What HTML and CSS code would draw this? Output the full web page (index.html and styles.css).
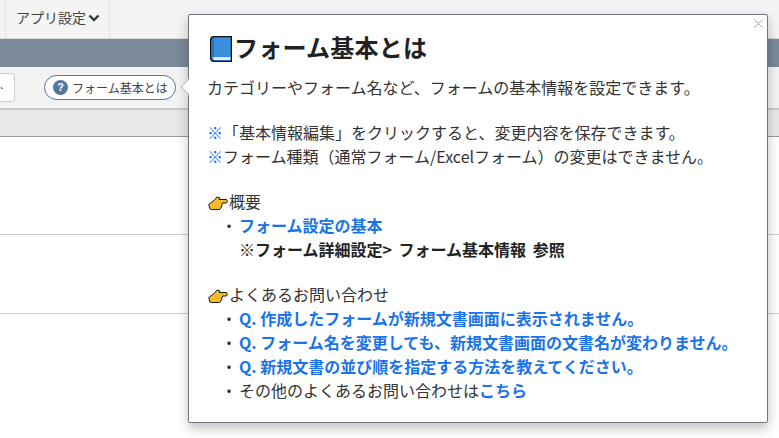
FILE: index.html
```html
<!DOCTYPE html>
<html lang="ja">
<head>
<meta charset="utf-8">
<title>フォーム基本とは</title>
<link rel="stylesheet" href="styles.css">
</head>
<body>
<div class="app">
  <nav class="topnav">
    <div class="tab tab-blank"></div>
    <div class="tab">アプリ設定<svg class="chev" viewBox="0 0 12 8" width="12" height="8"><path d="M1.500 1.500 6 6l4.500-4.500" fill="none" stroke="#2f3a46" stroke-width="2.400"/></svg></div>
  </nav>
  <div class="band"></div>
  <div class="toolbar">
    <div class="tool-btn"><svg viewBox="0 0 5 4" width="5" height="4"><path d="M0 3.500 1 2.500l2 1.500" fill="none" stroke="#444" stroke-width="1"/></svg></div>
    <button class="help-pill"><span class="q">?</span>フォーム基本とは</button>
  </div>
  <div class="table-head"></div>
  <div class="row row-a"></div>
  <div class="row row-b"></div>
</div>
<aside class="pop">
  <span class="arrow"></span>
  <span class="close"><svg viewBox="0 0 9 9" width="9" height="9"><path d="M.5.500l8 8M8.500.500l-8 8" stroke="#a8a8a8" stroke-width="1" fill="none"/></svg></span>
  <h1 class="pop-title"><svg class="book" viewBox="0 0 22 26" width="22" height="26"><path d="M5 .500h16.500v25H5Q.500 25.500.500 21V5Q.500.500 5 .500z" fill="#3a8edb" stroke="#111" stroke-width="1.500"/><path d="M3 2.500v18" stroke="#2a70b8" stroke-width="2"/><rect x="3.500" y="21" width="17" height="3" fill="#e2e9f0"/></svg>フォーム基本とは</h1>
  <p class="lead">カテゴリーやフォーム名など、フォームの基本情報を設定できます。</p>
  <p class="note"><span class="mark">※</span>「基本情報編集」をクリックすると、変更内容を保存できます。</p>
  <p class="note gap"><span class="mark">※</span>フォーム種類（通常フォーム/Excelフォーム）の変更はできません。</p>
  <p class="hd"><svg class="hand" viewBox="0 0 20 14" width="20" height="14"><path d="M.700 8.500 6 4.500 9 1l3 1-1 1.500h7.500q1.800 1.800 0 3.500H14.500L13 12l-1.500 1.500H3.500L2 13z" fill="#f7ba2c" stroke="#1c1c1c" stroke-width="1"/></svg>概要</p>
  <ul class="links">
    <li><a>フォーム設定の基本</a></li>
    <li class="plain"><b>※フォーム詳細設定&gt; フォーム基本情報 参照</b></li>
  </ul>
  <p class="hd"><svg class="hand" viewBox="0 0 20 14" width="20" height="14"><path d="M.700 8.500 6 4.500 9 1l3 1-1 1.500h7.500q1.800 1.800 0 3.500H14.500L13 12l-1.500 1.500H3.500L2 13z" fill="#f7ba2c" stroke="#1c1c1c" stroke-width="1"/></svg>よくあるお問い合わせ</p>
  <ul class="links">
    <li><a>Q. 作成したフォームが新規文書画面に表示されません。</a></li>
    <li><a>Q. フォーム名を変更しても、新規文書画面の文書名が変わりません。</a></li>
    <li><a>Q. 新規文書の並び順を指定する方法を教えてください。</a></li>
    <li>その他のよくあるお問い合わせは<a>こちら</a></li>
  </ul>
</aside>
</body>
</html>
```
FILE: styles.css
```css
* { box-sizing: border-box; }
html, body { margin: 0; height: 100%; overflow: hidden; background: #fff; }
body { font-family: "Noto Sans CJK JP", "Liberation Sans", sans-serif; color: #333; position: relative; }
.topnav { height: 39px; background: #f4f4f4; display: flex; border-bottom: 1px solid #d8d8d8; }
.tab { height: 38px; border-right: 1px solid #e2e2e2; display: flex; align-items: center; gap: 2px; font-size: 14px; line-height: 34px; padding: 0 9px 4px 10px; color: #444; }
.tab-blank { width: 6px; padding: 0; }
.chev { flex: none; margin-top: 1px; }
.band { height: 28px; background: #7a8a99; }
.toolbar { height: 43px; background: #f3f3f3; border-bottom: 2px solid #c8c8c8; display: flex; align-items: center; padding-bottom: 1px; }
.tool-btn { width: 15px; height: 29px; background: #fff; border: 1px solid #ccc; border-left: 0; border-radius: 0 4px 4px 0; display: flex; align-items: center; }
.help-pill { margin-left: 29px; height: 25px; width: 132px; border: 1px solid #54779f; border-radius: 13px; background: #fff; display: flex; align-items: center; gap: 4px; padding: 0 0 0 8px; font: 12px "Noto Sans CJK JP", sans-serif; color: #444; white-space: nowrap; }
.q { width: 15px; height: 15px; border-radius: 50%; background: #54779f; color: #fff; font: bold 11px/15px "Liberation Sans", sans-serif; text-align: center; flex: none; }
.table-head { height: 27px; background: #e8e8e8; border-bottom: 1px solid #999; }
.row { background: #fff; border-bottom: 1px solid #ccc; }
.row-a { height: 98px; }
.row-b { height: 79px; }
.pop { position: absolute; left: 188px; top: 14px; width: 580px; height: 409px; background: #fff; border: 1px solid #70777e; border-radius: 2px; box-shadow: 0 5px 12px rgba(0,0,0,.25); padding: 15px 18px 0; font-size: 16px; line-height: 24px; }
.arrow { position: absolute; left: -6px; top: 66px; width: 12px; height: 12px; background: #fff; border: 1px solid #bbb; border-width: 0 0 1px 1px; transform: rotate(45deg); }
.close { position: absolute; right: 4px; top: 4px; width: 9px; height: 9px; line-height: 0; }
.pop-title { margin: 0 0 11px; font-size: 24px; line-height: 34px; font-weight: 700; display: flex; align-items: center; color: #222; letter-spacing: .25px; }
.book { flex: none; margin: 4px 2px 0 3px; }
p { margin: 0; }
.lead { margin-bottom: 21px; }
.mark { color: #1a73e8; }
.gap { margin-bottom: 21px; }
.hd { display: flex; align-items: center; }
.hand { flex: none; margin: 4px 1px 0 1px; }
ul.links { list-style: none; margin: 0 0 21px; padding: 0 0 0 32px; position: relative; }
ul.links:last-child { margin-bottom: 0; }
li { position: relative; }
li::before { content: "・"; position: absolute; left: -18px; width: 16px; text-align: center; }
li.plain::before { content: none; }
li.plain b { color: #222; word-spacing: 3px; }
a { color: #1a73e8; font-weight: 700; }
```
